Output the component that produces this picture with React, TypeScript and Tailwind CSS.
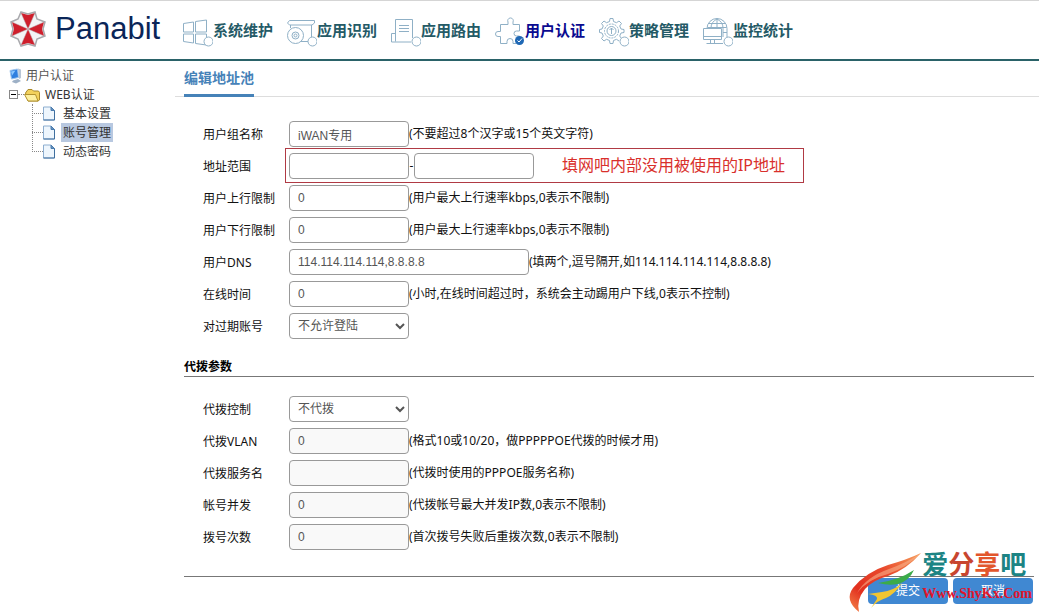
import React, { useState } from 'react';

interface Field {
  id: string;
  label: string;
  value?: string;
  hint?: string;
  wide?: boolean;
  disabled?: boolean;
  options?: string[];
}

const userFields: Field[] = [
  { id: 'name', label: '用户组名称', value: 'iWAN专用', hint: '(不要超过8个汉字或15个英文字符)' },
  { id: 'range', label: '地址范围' },
  { id: 'up', label: '用户上行限制', value: '0', hint: '(用户最大上行速率kbps,0表示不限制)' },
  { id: 'down', label: '用户下行限制', value: '0', hint: '(用户最大上行速率kbps,0表示不限制)' },
  { id: 'dns', label: '用户DNS', value: '114.114.114.114,8.8.8.8', hint: '(填两个,逗号隔开,如114.114.114.114,8.8.8.8)', wide: true },
  { id: 'online', label: '在线时间', value: '0', hint: '(小时,在线时间超过时，系统会主动踢用户下线,0表示不控制)' },
  { id: 'expired', label: '对过期账号', options: ['不允许登陆', '允许登陆'] },
];

const dialFields: Field[] = [
  { id: 'dial', label: '代拨控制', options: ['不代拨', '代拨'] },
  { id: 'vlan', label: '代拨VLAN', value: '0', hint: '(格式10或10/20，做PPPPPOE代拨的时候才用)', disabled: true },
  { id: 'service', label: '代拨服务名', value: '', hint: '(代拨时使用的PPPOE服务名称)', disabled: true },
  { id: 'concurrent', label: '帐号并发', value: '0', hint: '(代拨帐号最大并发IP数,0表示不限制)', disabled: true },
  { id: 'retry', label: '拨号次数', value: '0', hint: '(首次拨号失败后重拨次数,0表示不限制)', disabled: true },
];

const control =
  'h-[26px] rounded border border-[#999] bg-white font-["Liberation_Sans","Noto_Sans_CJK_SC",sans-serif] text-xs text-[#555] disabled:bg-[#f9f9f9]';

const Logo = () => (
  <svg className="h-9 w-9 shrink-0" viewBox="0 0 36 36">
    <path d="M11 1 L18 3 L25 1 L27 8 L35 11 L33 18 L35 25 L27 28 L25 35 L18 33 L11 35 L8 28 L1 25 L3 18 L1 11 L8 8 Z" fill="#f4f4f5" stroke="#a8a8ac" strokeWidth="1.5" />
    <g fill="#cf1f2c">
      <path d="M18 18 L11 2 L18 4 L25 2 Z" />
      <path d="M18 18 L34 11 L32 18 L34 25 Z" />
      <path d="M18 18 L25 34 L18 32 L11 34 Z" />
      <path d="M18 18 L2 25 L4 18 L2 11 Z" />
    </g>
    <path d="M18 18 L11 2 M18 18 L25 2 M18 18 L34 11 M18 18 L34 25 M18 18 L25 34 M18 18 L11 34 M18 18 L2 25 M18 18 L2 11" stroke="#b9b9bd" strokeWidth=".5" />
  </svg>
);

const NavIcon = ({ children }: { children: React.ReactNode }) => (
  <svg className="h-[30px] w-[30px] shrink-0" viewBox="0 0 30 30" fill="none" stroke="#8fb0c6" strokeWidth="1">
    {children}
  </svg>
);

const Dot = () => <circle cx="25.5" cy="24.5" r="4.5" fill="#fff" />;

const navItems = [
  {
    label: '系统维护',
    icon: (
      <>
        <path d="M.5 6.500 L10.500 5 V15 H.500 Z M12.500 4.500 L23.500 3 V15 H12.500 Z M.5 17 H10.500 V26 L.5 24.500 Z M12.500 17 H23.500 V28 L12.500 26.500 Z" />
        <Dot />
      </>
    ),
  },
  {
    label: '应用识别',
    icon: (
      <>
        <path d="M2.500 3.500 H27.500 V6 L25 8 H2.500 L.5 6 Z M3.500 8 V11 M24.500 8 V20 M14 24.500 H21" />
        <circle cx="8.500" cy="18.500" r="8" />
        <circle cx="8.500" cy="18.500" r="3.500" />
        <circle cx="8.500" cy="18.500" r="1.500" />
        <Dot />
      </>
    ),
  },
  {
    label: '应用路由',
    icon: (
      <>
        <path d="M4.500 24.500 V2.500 H21.500 V21 M4.500 16.500 H.5 V25 H20 M8 8.500 H18 M8 11.500 H18 M8 14.500 H18" />
        <Dot />
      </>
    ),
  },
  {
    label: '用户认证',
    active: true,
    icon: (
      <>
        <path d="M5.500 7.500 H13 V5 A2.800 2.800 0 1 1 18 5 V7.500 H24.500 V14 H21.500 A2.500 2.500 0 0 0 21.500 19 H24.500 M5.500 7.500 V14.500 H3 A2.500 2.500 0 1 0 3 19.500 H5.500 V26.500 H12 V24.500 A3 3 0 0 1 18 24.500 V26.500 H21" />
        <circle cx="24.500" cy="23.500" r="4.500" fill="#1f68b5" stroke="none" />
        <path d="M22.500 23.500 L24 25 L27 21.500" stroke="#fff" />
      </>
    ),
  },
  {
    label: '策略管理',
    icon: (
      <>
        <path d="M10.500 4.500 L11 1.500 H14 L14.500 4.500 L17.500 5.700 L20 4 L22.500 6.500 L20.700 9 L22 12 L25 12.500 V15.500 L22 16 L20.700 19 L22.500 21.500 M10.500 4.500 L7.500 5.700 L5 4 L2.500 6.500 L4.300 9 L3 12 L.5 12.500 V15.500 L3 16 L4.300 19 L2.500 21.500 L5 24 L7.500 22.300 L10.500 23.500 L11 26.500 H14 L14.500 23.500 L17.500 22.300 L20 24" />
        <circle cx="12.500" cy="14" r="7" strokeDasharray="2 1" />
        <circle cx="12.500" cy="14" r="4.500" />
        <path d="M12.500 17 V11 M10.500 13 L12.500 11 L14.500 13" />
        <Dot />
      </>
    ),
  },
  {
    label: '监控统计',
    icon: (
      <>
        <path d="M4 11.500 A10 10 0 0 1 24 11.500 V20 M14 2 V11 M14 2 Q8 5 8 11 M14 2 Q20 5 20 11 V20 M6 6.500 H22 M4.500 10.500 H23.500 M20 15.500 H24" />
        <path d="M.5 11.500 H18.500 V22.500 H.5 Z M.5 19.500 H18.500 M7.500 22.500 V26 M11.500 22.500 V26 M3.500 26.500 H20" />
        <Dot />
      </>
    ),
  },
];

const Header = () => (
  <header className="flex h-[61px] items-center border-t border-b-2 border-t-[#d5d5d5] border-b-[#2a6268] pl-[10px]">
    <div className="flex w-[173px] shrink-0 items-center gap-[9px] pb-[2px]">
      <Logo />
      <span className="font-['Liberation_Sans',sans-serif] text-[31px] leading-9 text-[#0a2558]">Panabit</span>
    </div>
    <nav className="flex gap-[14px] pt-[3px]">
      {navItems.map((item) => (
        <a
          key={item.label}
          href="#"
          className={`flex shrink-0 items-center text-[15px] leading-5 font-bold whitespace-nowrap ${item.active ? 'text-[#0a0a90]' : 'text-[#245a66]'}`}
        >
          <NavIcon>{item.icon}</NavIcon>
          <span className="pb-1">{item.label}</span>
        </a>
      ))}
    </nav>
  </header>
);

const PageIcon = () => (
  <svg className="h-[15px] w-3 shrink-0" viewBox="0 0 12 15">
    <path d="M.5 1 H8 L11.500 4.500 V14 H.5 Z" fill="#eef6fd" stroke="#8daed0" />
    <path d="M11.500 4.500 V14 H.5" fill="none" stroke="#3f6f9f" />
    <path d="M8 1 V4.500 H11.500 Z" fill="#6792bf" stroke="#4b7cae" />
  </svg>
);

const Sidebar = () => {
  const [open, setOpen] = useState(true);
  const [current, setCurrent] = useState('账号管理');

  return (
    <aside className="w-[175px] shrink-0 pt-[5px] pl-[9px] text-xs leading-[19px] text-[#333]">
      <a href="#" className="flex items-center gap-1 text-[#555]">
        <svg className="h-4 w-[13px]" viewBox="0 0 13 16">
          <path d="M1 2.500 L8.500 1 L9.500 9.500 L2.500 11 Z" fill="#2f7fe0" stroke="#9cc4ee" />
          <path d="M2 3.500 L6.500 2.500 L3 7.500 Z" fill="#8cc8ff" />
          <path d="M9 .5 L12 1.500 V10 L10 11 Z" fill="#b9c6d6" />
          <path d="M4 12.500 L9 11 L12 13 L7 15.500 L3 14 Z" fill="#9db0c6" />
        </svg>
        用户认证
      </a>
      <div className="flex items-center">
        <button
          type="button"
          aria-label="展开"
          onClick={() => setOpen(!open)}
          className="flex h-[9px] w-[9px] items-center justify-center border border-[#888]"
        >
          <span className="h-px w-[5px] bg-black" />
        </button>
        <span className="w-[6px] border-t border-dotted border-[#888]" />
        <a href="#" className="flex items-center gap-1">
          <svg className="h-[14px] w-[17px]" viewBox="0 0 17 14">
            <path d="M1.500 5 L4 1.500 H8 L9.500 3 H14.500 L15.500 4.500 V12 L14 13 H4 Z" fill="#f3d25c" stroke="#a8892a" />
            <path d="M.5 6.500 H11.500 L14 13 H4 Z" fill="#fdf0a0" stroke="#b3922e" />
          </svg>
          WEB认证
        </a>
      </div>
      {open && (
        <ul className="relative pl-[23px]">
          <li className="absolute top-0 left-[23px] h-12 border-l border-dotted border-[#888]" />
          {['基本设置', '账号管理', '动态密码'].map((name) => (
            <li key={name} className="flex items-center">
              <span className="w-[11px] border-t border-dotted border-[#888]" />
              <PageIcon />
              <a
                href="#"
                onClick={() => setCurrent(name)}
                className={`ml-[6px] px-[2px] ${current === name ? 'bg-[#b8c8e0]' : ''}`}
              >
                {name}
              </a>
            </li>
          ))}
        </ul>
      )}
    </aside>
  );
};

const FieldRow = ({ field }: { field: Field }) => (
  <div className="flex h-[26px] items-center whitespace-nowrap">
    <label htmlFor={field.id} className="w-[86px] shrink-0 pt-px">
      {field.label}
    </label>
    {field.id === 'range' ? (
      <div className="relative flex items-center">
        <input id="range" type="text" className={`${control} w-[120px] px-2`} />
        <span className="w-[5px] text-center">-</span>
        <input type="text" aria-label="结束地址" className={`${control} w-[120px] px-2`} />
        <div className="pointer-events-none absolute -top-[5px] -left-1 flex h-[35px] w-[519px] items-center justify-end border border-[#b03a44] pr-[18px] pb-[2px] text-base text-[#d9302c]">
          填网吧内部没用被使用的IP地址
        </div>
      </div>
    ) : field.options ? (
      <select id={field.id} className={`${control} w-[120px] pl-1`}>
        {field.options.map((option) => (
          <option key={option}>{option}</option>
        ))}
      </select>
    ) : (
      <input
        id={field.id}
        type="text"
        defaultValue={field.value}
        disabled={field.disabled}
        className={`${control} px-2 ${field.wide ? 'w-60' : 'w-[120px]'}`}
      />
    )}
    {field.hint && <span>{field.hint}</span>}
  </div>
);

const Watermark = () => (
  <div className="pointer-events-none absolute -top-8 right-[2px] flex">
    <svg className="h-[68px] w-[78px]" viewBox="0 0 78 68">
      <defs>
        <linearGradient id="swoosh" x1="0" y1="1" x2="1" y2="0">
          <stop offset="0" stopColor="#f58a4c" />
          <stop offset=".25" stopColor="#e2301f" />
          <stop offset=".6" stopColor="#e8492c" />
          <stop offset="1" stopColor="#f7a05c" />
        </linearGradient>
      </defs>
      <path d="M77 8 Q62 15 44 20 Q22 27 9 43 Q0 55 15 67 Q12 55 21 44 Q29 35 44 31 Q62 25 77 8 Z" fill="url(#swoosh)" />
      <path d="M77 8 Q62 18 45 24 Q22 32 13 48 Q24 34 44 29 Q62 23 77 8 Z" fill="#f9b08a" opacity=".6" />
      <path d="M70 25 Q65 36 54 39 Q45 41 34 38 Q55 35 70 25 Z" fill="#3cab49" />
      <path d="M58 38 Q49 46 38 47 L24 49 Q34 50 33 54 L27 63 Q34 55 42 53 Q51 49 58 38 Z" fill="#f2c531" />
    </svg>
    <div className="flex flex-col pt-[5px]">
      <div className="flex text-[26px] leading-[28px] font-bold">
        <span className="text-[#1c8484]">爱</span>
        <span className="text-[#c8452f]">分</span>
        <span className="text-[#e2562c]">享</span>
        <span className="text-[#1c8484]">吧</span>
      </div>
      <span className="pt-[6px] font-['Liberation_Serif',serif] text-sm leading-5 font-bold text-[#e0142a]">Www.ShyKx.Com</span>
    </div>
  </div>
);

const App: React.FC = () => {
  return (
    <div className="min-h-screen bg-white font-['Noto_Sans','Noto_Sans_CJK_SC',sans-serif] text-xs text-[#111]">
      <Header />
      <div className="flex">
        <Sidebar />
        <main className="min-w-0 flex-1">
          <div className="flex h-9 border-b border-[#ddd] pl-[9px]">
            <h1 className="h-9 border-b-[3px] border-[#4682b8] text-sm leading-[34px] font-bold text-[#4682b8]">编辑地址池</h1>
          </div>
          <form className="pr-[5px] pl-[9px]" onSubmit={(e) => e.preventDefault()}>
            <div className="flex flex-col gap-[6px] pt-6 pl-[19px]">
              {userFields.map((field) => (
                <FieldRow key={field.id} field={field} />
              ))}
            </div>
            <h2 className="mt-[18px] border-b border-[#777] pt-px leading-[18px] font-bold text-black">代拨参数</h2>
            <div className="flex flex-col gap-[6px] pt-[19px] pl-[19px]">
              {dialFields.map((field) => (
                <FieldRow key={field.id} field={field} />
              ))}
            </div>
            <div className="relative mt-[26px] flex justify-end gap-[5px] border-t border-[#777] pt-px pr-px">
              <button type="submit" className="h-[26px] w-20 rounded bg-[#4088d2] text-white">
                提交
              </button>
              <button type="button" className="h-[26px] w-20 rounded bg-[#4088d2] text-white">
                取消
              </button>
              <Watermark />
            </div>
          </form>
        </main>
      </div>
    </div>
  );
};

export default App;
